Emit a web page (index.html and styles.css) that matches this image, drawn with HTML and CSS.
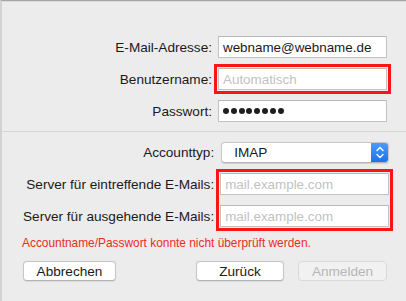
FILE: index.html
```html
<!DOCTYPE html>
<html lang="de">
<head>
  <meta charset="UTF-8">
  <meta name="viewport" content="width=device-width, initial-scale=1.0">
  <title>Account hinzufügen</title>
  <link rel="stylesheet" href="styles.css">
</head>
<body>
  <div class="pane">
    <div class="rows rows-top">
      <label class="label" for="email">E-Mail-Adresse:</label>
      <input class="field" id="email" type="text" value="webname@webname.de">

      <label class="label" for="user">Benutzername:</label>
      <input class="field field-error" id="user" type="text" placeholder="Automatisch">

      <label class="label">Passwort:</label>
      <div class="field dots"><i></i><i></i><i></i><i></i><i></i><i></i><i></i><i></i></div>
    </div>

    <div class="separator"></div>

    <div class="rows rows-server">
      <label class="label row-type">Accounttyp:</label>
      <div class="select row-type">
        <span class="select-value">IMAP</span>
        <span class="stepper">
          <svg width="16" height="19" viewBox="0 0 16 19">
            <path d="M5 7.5 L8 4.5 L11 7.5" fill="none" stroke="#fff" stroke-width="1.4" stroke-linecap="round" stroke-linejoin="round"/>
            <path d="M5 11.5 L8 14.5 L11 11.5" fill="none" stroke="#fff" stroke-width="1.4" stroke-linecap="round" stroke-linejoin="round"/>
          </svg>
        </span>
      </div>

      <label class="label row-in" for="imap">Server für eintreffende E-Mails:</label>
      <input class="field row-in" id="imap" type="text" placeholder="mail.example.com">

      <label class="label row-out" for="smtp">Server für ausgehende E-Mails:</label>
      <input class="field row-out" id="smtp" type="text" placeholder="mail.example.com">

      <div class="error-box"></div>
    </div>

    <p class="error">Accountname/Passwort konnte nicht überprüft werden.</p>

    <div class="buttons">
      <button class="btn btn-cancel">Abbrechen</button>
      <button class="btn btn-back">Zurück</button>
      <button class="btn" disabled>Anmelden</button>
    </div>
  </div>
</body>
</html>
```

FILE: styles.css
```css
* {
  box-sizing: border-box;
}

html, body {
  margin: 0;
  padding: 0;
  height: 100%;
}

body {
  font-family: "Liberation Sans", Arial, sans-serif;
  background-color: #ececec;
  color: #1c1c1c;
}

.pane {
  height: 100%;
  border-top: 1px solid #a6a6a6;
  border-left: 2px solid #d2d2d2;
  box-shadow: inset 0 1px 0 #dadada;
}

.rows {
  display: grid;
  grid-template-columns: 1fr 169px;
  column-gap: 6px;
  row-gap: 10px;
  align-items: center;
  padding: 0 19px 0 21px;
}

.rows-top {
  padding-top: 35px;
}

.rows-server {
  padding-top: 10px;
}

.row-type {
  grid-row: 1;
}

.row-in {
  grid-row: 2;
}

.row-out {
  grid-row: 3;
}

.label {
  grid-column: 1;
  font-size: 13.6px;
  text-align: right;
  white-space: nowrap;
  color: #1a1a1a;
}

.field {
  grid-column: 2;
  height: 22px;
  margin: 0;
  padding: 0 4px;
  border: 1px solid #c3c3c3;
  border-top-color: #b9b9b9;
  background: #fff;
  font-family: "Liberation Sans", Arial, sans-serif;
  font-size: 13.4px;
  color: #1a1a1a;
  outline: none;
  border-radius: 0;
}

.field::placeholder {
  color: #c2c2c2;
}

.field-error {
  outline: 3px solid #fb1515;
  outline-offset: 1px;
}

.dots {
  display: flex;
  align-items: center;
  gap: 1.8px;
  padding-left: 4px;
}

.dots i {
  width: 6px;
  height: 6px;
  border-radius: 50%;
  background: #1e1e1e;
}

.separator {
  height: 1px;
  background: #d6d6d6;
  margin-top: 9px;
}

.select {
  grid-column: 2;
  height: 21px;
  margin-left: 1px;
  display: flex;
  align-items: center;
  background: #fff;
  border: 1px solid #c9c9c9;
  border-bottom-color: #b4b4b4;
  border-radius: 4px;
  overflow: hidden;
  box-shadow: 0 0.5px 1px rgba(0, 0, 0, 0.12);
}

.select-value {
  flex: 1;
  padding-left: 12px;
  font-size: 13.6px;
  color: #1a1a1a;
}

.stepper {
  width: 17px;
  height: 100%;
  display: flex;
  align-items: center;
  justify-content: center;
  background: linear-gradient(#4a9cf8, #1b73ea);
}

.error-box {
  grid-column: 2;
  grid-row: 2 / span 2;
  align-self: stretch;
  margin: -4px;
  border: 3px solid #fb1515;
  pointer-events: none;
}

.error {
  margin: 9px 0 0 20px;
  font-size: 11.9px;
  line-height: 14px;
  color: #ec2a1e;
}

.buttons {
  display: flex;
  gap: 14px;
  padding: 0 19px 0 21px;
  margin-top: 11px;
}

.btn {
  height: 20px;
  padding: 0;
  background: #fff;
  border: 1px solid #c6c6c6;
  border-bottom-color: #b3b3b3;
  border-radius: 4px;
  font-family: "Liberation Sans", Arial, sans-serif;
  font-size: 13.6px;
  color: #1a1a1a;
  box-shadow: 0 0.5px 1px rgba(0, 0, 0, 0.08);
}

.btn-cancel {
  width: 93px;
}

.btn-back {
  width: 88px;
  margin-left: auto;
}

.btn:disabled {
  width: 89px;
  background: #f1f1f1;
  border-color: #d9d9d9;
  color: #b6b6b6;
  box-shadow: none;
}
```
